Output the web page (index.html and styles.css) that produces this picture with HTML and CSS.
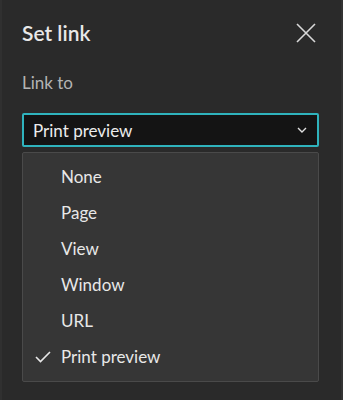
FILE: index.html
```html
<!DOCTYPE html>
<html>
<head>
<meta charset="utf-8">
<link rel="stylesheet" href="styles.css">
</head>
<body>
<div class="panel">
  <div class="header">
    <h1 class="title">Set link</h1>
    <svg class="close" width="20" height="20" viewBox="0 0 20 20"><path d="M1 1 L19 19 M19 1 L1 19" stroke="#d8d8d8" stroke-width="1.6" fill="none"/></svg>
  </div>
  <div class="label">Link to</div>
  <div class="select">
    <span>Print preview</span>
    <svg class="chev" width="10" height="6" viewBox="0 0 10 6"><path d="M1 1 L5 5 L9 1" stroke="#e0e0e0" stroke-width="1.4" fill="none"/></svg>
  </div>
  <ul class="menu">
    <li class="item">None</li>
    <li class="item">Page</li>
    <li class="item">View</li>
    <li class="item">Window</li>
    <li class="item">URL</li>
    <li class="item selected"><svg class="check" width="16" height="12" viewBox="0 0 16 12"><path d="M1 6 L5.5 10.5 L15 1" stroke="#e8e8e8" stroke-width="1.6" fill="none"/></svg>Print preview</li>
  </ul>
</div>
</body>
</html>
```
FILE: styles.css
```css
html, body {
  margin: 0;
  padding: 0;
  background: #2a2a2a;
}
body {
  width: 343px;
  height: 400px;
  overflow: hidden;
  font-family: Lato, "Noto Sans", sans-serif;
  color: #e6e6e6;
}
.panel {
  height: 400px;
  box-sizing: border-box;
  padding: 0 22px 0 22px;
  border-left: 2px solid #303030;
  border-right: 2px solid #333333;
  background: #2a2a2a;
}
.header {
  display: flex;
  align-items: center;
  justify-content: space-between;
  height: 64px;
}
.title {
  margin: 0 0 0 -2px;
  font-size: 21px;
  font-weight: 600;
  color: #e8e8e8;
}
.close {
  margin-right: 3px;
  margin-top: 2px;
}
.label {
  font-size: 17px;
  color: #b4b4b4;
  margin: 8px 0 0 -2px;
  height: 41px;
}
.select {
  margin-left: -2px;
  height: 34px;
  box-sizing: border-box;
  border: 2px solid #2fb3bd;
  border-radius: 2px;
  background: #141414;
  display: flex;
  align-items: center;
  justify-content: space-between;
  padding: 0 10px 0 9px;
  font-size: 17px;
  color: #ececec;
}
.menu {
  list-style: none;
  margin: 5px 0 0 -2px;
  padding: 5px 0 7px;
  background: #363636;
  border: 1px solid #4a4a4a;
  border-radius: 2px;
}
.item {
  height: 36px;
  display: flex;
  align-items: center;
  padding-left: 38px;
  font-size: 17px;
  color: #e8e8e8;
  position: relative;
}
.check {
  position: absolute;
  left: 12px;
  top: 13px;
}
```
